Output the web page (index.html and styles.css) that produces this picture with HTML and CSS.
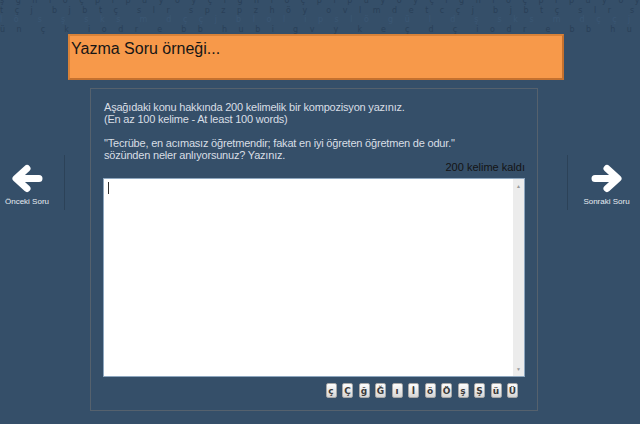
FILE: index.html
```
<!DOCTYPE html>
<html>
<head>
    <meta charset="utf-8">
    <title>Yazma Soru</title>
    <link rel="stylesheet" href="styles.css">
</head>
<body>

<div class="noise">
    <div>ş ğ n ı o ç p ı p ü y ö y ç ı ğ n ı o ç p ı p ü y ö y ç ı ğ n ı o ç p ı p ü y ö y ç ı ğ n ı o ç</div>
    <div>t ç j  b j b t ç  s l r  s p z p z h ö y  o v l m d e t c ç j  b j b t ç  s l r  s p z p z h ö y  o v</div>
    <div>l ö  s  ş  s k s  m  d ç ç j  b l o l  i p s l ö  g ü  l  d  ş  s k s  m  d ç ç j  b l o l  i p s l ö</div>
    <div>ü n  ç  k  i o d r  e  b b  h u b i  g v  y  k  e  ç  d  ç  i o d r  e  b b  h u b i  g v  y</div>
</div>

<div class="layout">
    <nav class="side side-left">
        <a class="nav-btn" href="#">
            <svg width="32" height="30" viewBox="0 0 32 30">
                <path d="M28 14.5 H6 M16 4.5 L5 14.5 L16 24.5" fill="none" stroke="#fff" stroke-width="7" stroke-linecap="round" stroke-linejoin="round"/>
            </svg>
            <span>Önceki Soru</span>
        </a>
    </nav>

    <main class="main">
        <h1 class="title">Yazma Soru örneği...</h1>

        <section class="panel">
            <p class="text">Aşağıdaki konu hakkında 200 kelimelik bir kompozisyon yazınız.<br>(En az 100 kelime - At least 100 words)</p>
            <p class="text">"Tecrübe, en acımasız öğretmendir; fakat en iyi öğreten öğretmen de odur."<br>sözünden neler anlıyorsunuz? Yazınız.</p>
            <div class="counter">200 kelime kaldı</div>

            <div class="editor">
                <textarea class="answer"></textarea>
                <span class="caret"></span>
                <div class="scroll">
                    <span>▲</span>
                    <span>▼</span>
                </div>
            </div>

            <div class="keys">
                <button>ç</button>
                <button>Ç</button>
                <button>ğ</button>
                <button>Ğ</button>
                <button>ı</button>
                <button>İ</button>
                <button>ö</button>
                <button>Ö</button>
                <button>ş</button>
                <button>Ş</button>
                <button>ü</button>
                <button>Ü</button>
            </div>
        </section>
    </main>

    <nav class="side side-right">
        <a class="nav-btn" href="#">
            <svg width="32" height="30" viewBox="0 0 32 30">
                <path d="M4 14.5 H26 M16 4.5 L27 14.5 L16 24.5" fill="none" stroke="#fff" stroke-width="7" stroke-linecap="round" stroke-linejoin="round"/>
            </svg>
            <span>Sonraki Soru</span>
        </a>
    </nav>
</div>

</body>
</html>
```

FILE: styles.css
```
body {
    margin: 0;
    height: 424px;
    overflow: hidden;
    background-color: #354f69;
    font-family: "Liberation Sans", Arial, sans-serif;
}

/* faint letter pattern across the top */
.noise {
    height: 34px;
    overflow: hidden;
    font-family: "DejaVu Sans", sans-serif;
    font-size: 8px;
    line-height: 9.5px;
    letter-spacing: 4px;
    word-spacing: 1px;
    color: #2a4058;
}

.noise div {
    height: 9.5px;
    white-space: pre;
}

.noise div:first-child {
    margin-top: -4px;
}

.noise div:nth-child(3) {
    color: #3b5774;
}

.layout {
    display: flex;
    height: 390px;
}

.side {
    flex: none;
}

.side-left {
    width: 65px;
}

.side-right {
    width: 73px;
}

.nav-btn {
    display: flex;
    flex-direction: column;
    align-items: center;
    margin-top: 121px;
    height: 55px;
    padding-top: 9px;
    box-sizing: border-box;
    color: #e6ecf2;
    text-decoration: none;
    font-size: 8px;
}

.nav-btn span {
    margin-top: 3px;
}

.side-left .nav-btn {
    border-right: 1px solid #2c4258;
    padding-right: 10px;
}

.side-right .nav-btn {
    border-left: 1px solid #2c4258;
    padding-left: 5px;
}

.main {
    flex: 1;
    min-width: 0;
}

.title {
    margin: 0 3px;
    height: 46px;
    box-sizing: border-box;
    padding: 4px 1px 0;
    background-color: #f7994a;
    border: 2px solid #c4712f;
    border-top-color: #d98238;
    border-left-color: #d98238;
    font-size: 16px;
    font-weight: normal;
    color: #161616;
}

.panel {
    margin: 8px 0 0 25px;
    width: 448px;
    height: 323px;
    box-sizing: border-box;
    border: 1px solid #55616d;
    padding: 12px 12px 0;
}

.text {
    margin: 0 0 12px;
    padding-left: 1px;
    font-size: 11px;
    line-height: 12px;
    letter-spacing: -0.2px;
    color: #d8dee5;
}

.counter {
    margin-top: -12px;
    text-align: right;
    font-size: 11px;
    line-height: 12px;
    color: #141414;
}

.editor {
    position: relative;
    display: flex;
    margin-top: 5px;
    height: 197px;
    border: 1px solid #8ea7bf;
    background-color: #fff;
}

.answer {
    flex: 1;
    border: none;
    outline: none;
    resize: none;
    padding: 2px 3px;
    font-family: "Liberation Sans", Arial, sans-serif;
    font-size: 11px;
}

.caret {
    position: absolute;
    left: 4px;
    top: 3px;
    width: 1px;
    height: 12px;
    background-color: #333;
}

.scroll {
    display: flex;
    flex-direction: column;
    justify-content: space-between;
    width: 11px;
    background-color: #ececec;
    font-size: 5px;
    color: #999;
    text-align: center;
    padding: 4px 0;
}

.keys {
    display: flex;
    justify-content: flex-end;
    gap: 5.5px;
    margin-top: 6px;
    padding-right: 7px;
}

.keys button {
    width: 11px;
    height: 15px;
    padding: 0;
    border: 1px solid #a8a8a8;
    border-radius: 2px;
    background: linear-gradient(#fdfdfd, #d6d6d6);
    font-family: "DejaVu Sans", sans-serif;
    font-size: 9px;
    font-weight: bold;
    color: #3a3a3a;
    cursor: pointer;
}
```
